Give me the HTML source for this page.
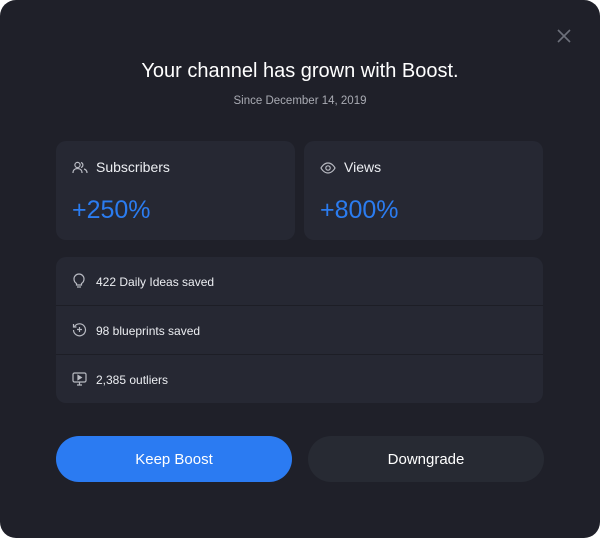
<!DOCTYPE html>
<html><head><style>
html,body{margin:0;padding:0;background:#fff;}
body{width:600px;height:538px;overflow:hidden;font-family:"Liberation Sans",sans-serif;}
.m{position:absolute;left:0;top:0;width:600px;height:538px;background:#1f2029;border-radius:16px;}
.t{position:absolute;top:60px;width:600px;text-align:center;color:#fff;font-size:20px;}
.s{position:absolute;top:95px;width:600px;text-align:center;color:#a9abb3;font-size:11.5px;}
.c{position:absolute;top:141px;width:239px;height:99px;background:#262833;border-radius:10px;}
.c .l{position:absolute;left:40px;top:18px;color:#eceef2;font-size:14px;}
.c .v{position:absolute;left:16px;top:55px;color:#2b7cf0;font-size:25px;}
.c svg{position:absolute;left:16px;top:20px;}
.list{position:absolute;left:56px;top:257px;width:487px;height:146px;background:#262833;border-radius:10px;}
.r{position:absolute;left:0;width:487px;height:49px;}
.r span{position:absolute;left:40px;top:18px;color:#eceef2;font-size:12px;}
.r svg{position:absolute;left:16px;top:16px;}
.d{position:absolute;left:0;width:487px;height:1px;background:#1d1e26;}
.b{position:absolute;top:436px;width:236px;height:46px;border-radius:23px;text-align:center;line-height:48px;color:#fff;font-size:15px;}
</style></head><body>
<div class="m">
<svg style="position:absolute;left:556px;top:28px" width="16" height="16" viewBox="0 0 16 16"><path d="M2 2L14 14M14 2L2 14" stroke="#6d707a" stroke-width="1.6"/></svg>
<div class="t">Your channel has grown with Boost.</div>
<div class="s">Since December 14, 2019</div>
<div class="c" style="left:56px">
<svg width="16" height="14" viewBox="0 0 16 14" fill="none" stroke="#b8bac2" stroke-width="1.2"><circle cx="5.5" cy="4" r="2.6"/><path d="M1 12c0-3 2-4.5 4.5-4.5S10 9 10 12"/><path d="M9 1.5a2.6 2.6 0 010 5M12 8c1.8.5 3 2 3 4"/></svg>
<div class="l">Subscribers</div><div class="v">+250%</div></div>
<div class="c" style="left:304px">
<svg width="16" height="14" viewBox="0 0 16 14" fill="none" stroke="#b8bac2" stroke-width="1.2"><path d="M1 7s2.5-5 7-5 7 5 7 5-2.5 5-7 5-7-5-7-5z"/><circle cx="8" cy="7" r="2.2"/></svg>
<div class="l">Views</div><div class="v">+800%</div></div>
<div class="list">
<div class="r" style="top:0"><svg width="14" height="16" viewBox="0 0 14 16" fill="none" stroke="#b8bac2" stroke-width="1.2"><path d="M4.5 10.5C3 9.5 2 8 2 6a5 5 0 0110 0c0 2-1 3.5-2.5 4.5v1.5h-5z"/><path d="M5 14h4"/></svg><span>422 Daily Ideas saved</span></div>
<div class="d" style="top:48px"></div>
<div class="r" style="top:49px"><svg width="15" height="15" viewBox="0 0 15 15" fill="none" stroke="#b8bac2" stroke-width="1.2"><path d="M2.5 4.5A6 6 0 111.5 8"/><path d="M1.5 2v3h3"/><path d="M7.5 5v5M5 7.5h5"/></svg><span>98 blueprints saved</span></div>
<div class="d" style="top:97px"></div>
<div class="r" style="top:98px"><svg width="15" height="15" viewBox="0 0 15 15" fill="none" stroke="#b8bac2" stroke-width="1.2"><rect x="1" y="2" width="13" height="9" rx="1.5"/><path d="M5 14h5M7.5 11v3"/><path d="M6 4.5v4l3.3-2z" fill="#b8bac2"/></svg><span>2,385 outliers</span></div>
</div>
<div class="b" style="left:56px;background:#2b7bf2">Keep Boost</div>
<div class="b" style="left:308px;background:#272a33">Downgrade</div>
</div>
</body></html>
